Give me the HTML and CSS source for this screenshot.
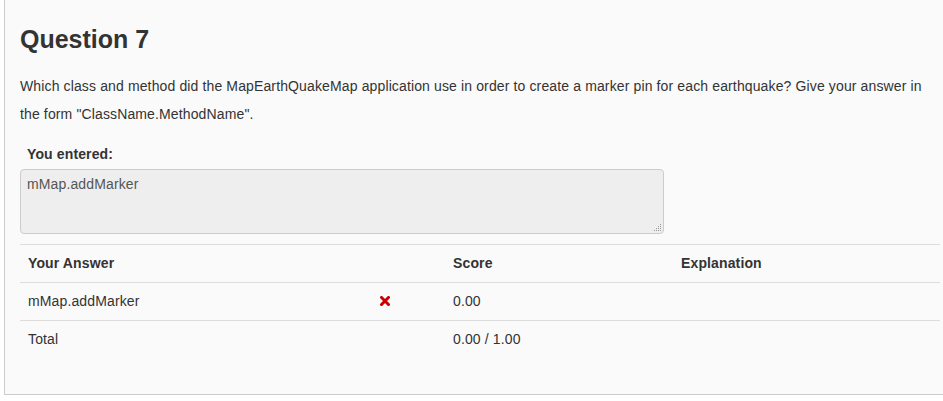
FILE: index.html
```html
<!DOCTYPE html>
<html>
<head>
<meta charset="utf-8">
<link rel="stylesheet" href="styles.css">
</head>
<body>
<div class="panel">
  <h2 class="title">Question 7</h2>
  <p class="prompt">Which class and method did the MapEarthQuakeMap application use in order to create a marker pin for each earthquake? Give your answer in the form "ClassName.MethodName".</p>
  <div class="entered-label">You entered:</div>
  <div class="entered-wrap">
    <textarea class="entered" readonly>mMap.addMarker</textarea>
    <svg class="grip" width="9" height="9" viewBox="0 0 9 9">
      <g fill="#999">
        <rect x="7" y="1" width="1" height="1"/>
        <rect x="5" y="3" width="1" height="1"/><rect x="7" y="3" width="1" height="1"/>
        <rect x="3" y="5" width="1" height="1"/><rect x="5" y="5" width="1" height="1"/><rect x="7" y="5" width="1" height="1"/>
        <rect x="1" y="7" width="1" height="1"/><rect x="3" y="7" width="1" height="1"/><rect x="5" y="7" width="1" height="1"/><rect x="7" y="7" width="1" height="1"/>
      </g>
    </svg>
  </div>
  <table class="results">
    <colgroup>
      <col class="c-answer">
      <col class="c-icon">
      <col class="c-score">
      <col class="c-expl">
    </colgroup>
    <thead>
      <tr>
        <th>Your Answer</th>
        <th></th>
        <th>Score</th>
        <th>Explanation</th>
      </tr>
    </thead>
    <tbody>
      <tr>
        <td>mMap.addMarker</td>
        <td><svg class="xmark" width="10" height="10" viewBox="0 0 10 10"><path d="M1.5 1.5 L8.5 8.5 M8.5 1.5 L1.5 8.5" stroke="#c00" stroke-width="3" stroke-linecap="square"/></svg></td>
        <td>0.00</td>
        <td></td>
      </tr>
      <tr>
        <td>Total</td>
        <td></td>
        <td>0.00 / 1.00</td>
        <td></td>
      </tr>
    </tbody>
  </table>
</div>
</body>
</html>
```

FILE: styles.css
```css
html, body {
  margin: 0;
  padding: 0;
  background: #fff;
  overflow: hidden;
}
body {
  font-family: "Liberation Sans", Arial, sans-serif;
  font-size: 14px;
  line-height: 20px;
  letter-spacing: 0.13px;
  color: #333;
}
.panel {
  box-sizing: border-box;
  width: 952px;
  margin-left: 4px;
  background: #fafafa;
  border: 1px solid #ccc;
  border-top: 0;
  padding: 24px 15px 16px 15px;
}
.title {
  margin: 0;
  font-size: 25px;
  line-height: 30px;
  font-weight: bold;
  letter-spacing: 0;
  color: #333;
}
.prompt {
  margin: 18px 0 0 0;
  line-height: 28px;
}
.entered-label {
  margin-top: 16px;
  padding-left: 7px;
  font-weight: bold;
}
.entered-wrap {
  position: relative;
  width: 644px;
  margin-top: 5px;
}
.entered {
  display: block;
  box-sizing: border-box;
  width: 644px;
  height: 65px;
  margin: 0;
  padding: 4px 6px;
  background: #eee;
  border: 1px solid #ccc;
  border-radius: 4px;
  font-family: "Liberation Sans", Arial, sans-serif;
  font-size: 14px;
  line-height: 20px;
  letter-spacing: 0.13px;
  color: #555;
  outline: none;
  resize: none;
}
.grip {
  position: absolute;
  right: 2px;
  bottom: 2px;
}
.results {
  width: 920px;
  margin: 10px 0 20px 0;
  border-collapse: collapse;
  table-layout: fixed;
}
.c-answer { width: 352px; }
.c-icon { width: 73px; }
.c-score { width: 228px; }
.c-expl { width: 267px; }
.results th,
.results td {
  text-align: left;
  vertical-align: top;
  padding: 8px 8px 9px 8px;
  line-height: 20px;
  border-top: 1px solid #ddd;
}
.results th {
  font-weight: bold;
}
.xmark {
  display: block;
  margin-top: 5px;
}
```
